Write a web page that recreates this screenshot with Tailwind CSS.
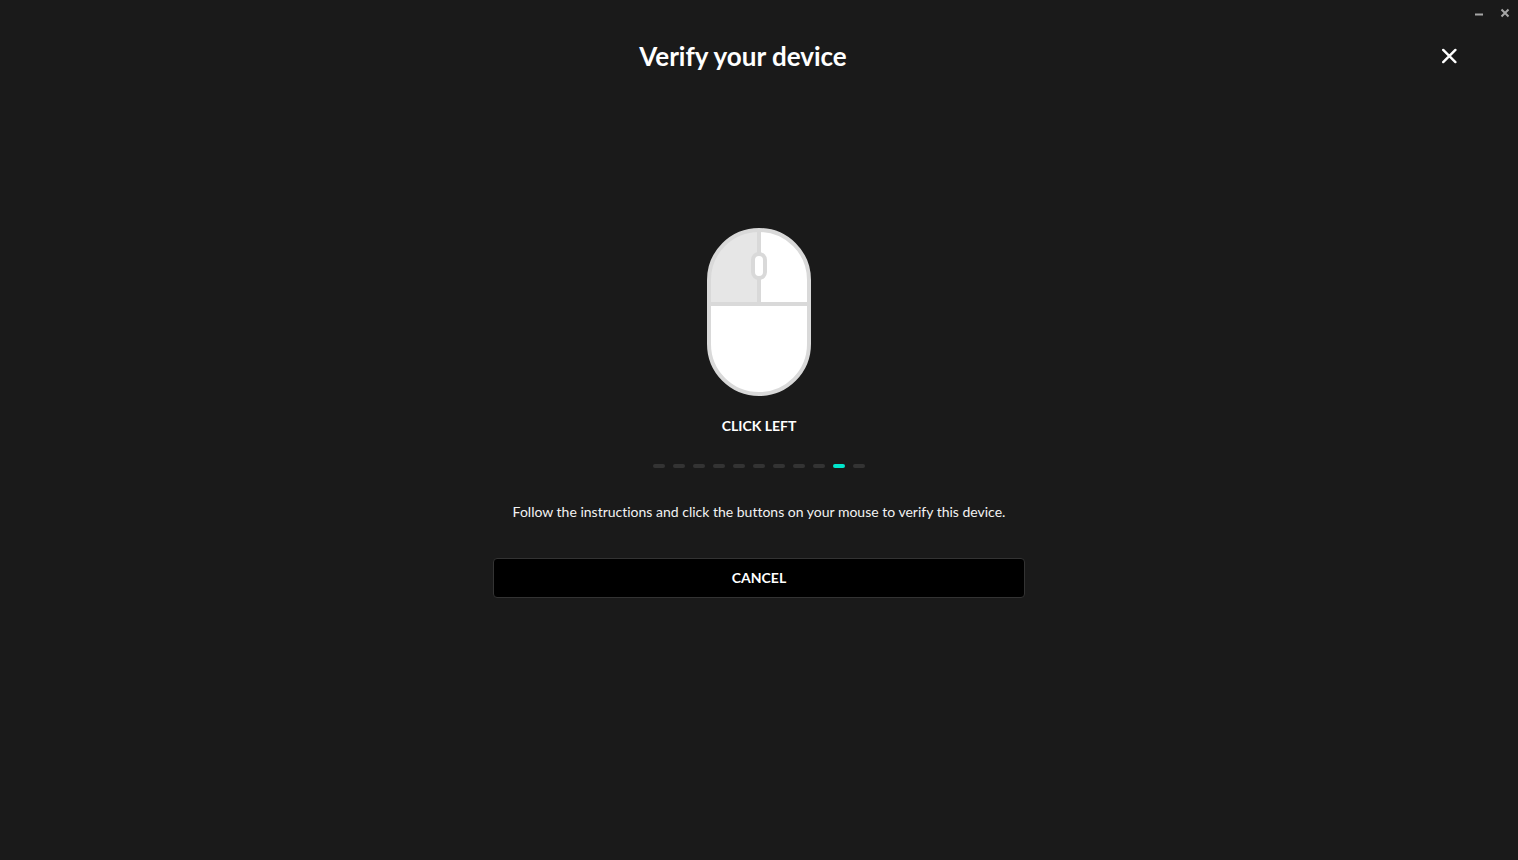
<!DOCTYPE html>
<html lang="en">
<head>
    <meta charset="UTF-8">
    <meta name="viewport" content="width=device-width, initial-scale=1.0">
    <title>Verify your device</title>
    <script src="https://cdn.jsdelivr.net/npm/@tailwindcss/browser@4"></script>
</head>
<body class="bg-[#1a1a1a] text-white font-['Lato',sans-serif] [font-variant-ligatures:none] min-h-screen flex flex-col">
    <!-- Window controls -->
    <div class="flex justify-end h-[26px] text-[#a6a6a6]">
        <button type="button" aria-label="Minimize" class="w-[26px] flex items-center justify-center">
            <svg class="size-3" viewBox="0 0 12 12" fill="none" stroke="currentColor" stroke-width="2"><path d="M2 7.5h8"/></svg>
        </button>
        <button type="button" aria-label="Close window" class="w-[26px] flex items-center justify-center">
            <svg class="size-3" viewBox="0 0 12 12" fill="none" stroke="currentColor" stroke-width="2"><path d="M2.5 2.5l7 7M9.5 2.5l-7 7"/></svg>
        </button>
    </div>

    <header class="flex items-center h-15 px-[53px]">
        <h1 class="flex-1 text-center text-[26px] leading-8 font-bold">Verify your device</h1>
        <button type="button" aria-label="Close" class="size-8 flex items-center justify-center">
            <svg class="size-4" viewBox="0 0 16 16" fill="none" stroke="currentColor" stroke-width="2.4" stroke-linecap="round"><path d="M2.2 1.9l12.2 12.2M14.4 1.9L2.2 14.1"/></svg>
        </button>
    </header>

    <main class="flex flex-col items-center w-full max-w-[532px] mx-auto pt-[142px]">
        <svg class="w-[104px] h-[168px]" viewBox="0 0 104 168" role="img" aria-label="Mouse with the left button highlighted">
            <rect x="2" y="2" width="100" height="164" rx="50" fill="#fff"/>
            <path d="M2 76V52A50 50 0 0 1 52 2V76Z" fill="#e6e6e6"/>
            <path d="M52 2V76M2 76H102" fill="none" stroke="#d9d9d9" stroke-width="4"/>
            <rect x="2" y="2" width="100" height="164" rx="50" fill="none" stroke="#d9d9d9" stroke-width="4"/>
            <rect x="46" y="26" width="12" height="24" rx="6" fill="#fff" stroke="#d9d9d9" stroke-width="4"/>
        </svg>

        <h2 class="mt-5 text-sm leading-5 font-bold">CLICK LEFT</h2>

        <div class="mt-7 flex gap-2" role="progressbar" aria-label="Verification step" aria-valuemin="1" aria-valuemax="11" aria-valuenow="10">
            <span class="w-3 h-1 rounded-full bg-[#333]"></span>
            <span class="w-3 h-1 rounded-full bg-[#333]"></span>
            <span class="w-3 h-1 rounded-full bg-[#333]"></span>
            <span class="w-3 h-1 rounded-full bg-[#333]"></span>
            <span class="w-3 h-1 rounded-full bg-[#333]"></span>
            <span class="w-3 h-1 rounded-full bg-[#333]"></span>
            <span class="w-3 h-1 rounded-full bg-[#333]"></span>
            <span class="w-3 h-1 rounded-full bg-[#333]"></span>
            <span class="w-3 h-1 rounded-full bg-[#333]"></span>
            <span class="w-3 h-1 rounded-full bg-[#00e6cc]"></span>
            <span class="w-3 h-1 rounded-full bg-[#333]"></span>
        </div>

        <p class="mt-8 text-sm leading-6 text-center text-[#f2f2f2]">Follow the instructions and click the buttons on your mouse to verify this device.</p>

        <button type="button" class="mt-[34px] w-full h-10 rounded-sm border border-[#333] bg-black text-sm font-bold">CANCEL</button>
    </main>
</body>
</html>
